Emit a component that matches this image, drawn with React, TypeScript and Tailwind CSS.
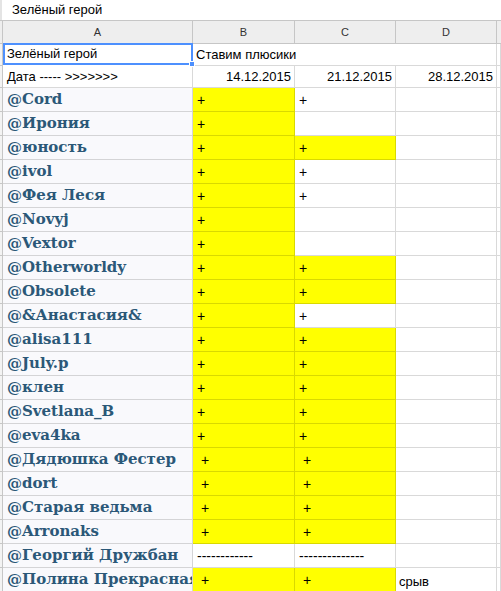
import React from "react";

type Row = {
  name: string;
  b: string;
  bYellow: boolean;
  c: string;
  cYellow: boolean;
  d?: string;
};

const rows: Row[] = [
  { name: "@Cord", b: "+", bYellow: true, c: "+", cYellow: false },
  { name: "@Ирония", b: "+", bYellow: true, c: "", cYellow: false },
  { name: "@юность", b: "+", bYellow: true, c: "+", cYellow: true },
  { name: "@ivol", b: "+", bYellow: true, c: "+", cYellow: false },
  { name: "@Фея Леся", b: "+", bYellow: true, c: "+", cYellow: false },
  { name: "@Novyj", b: "+", bYellow: true, c: "", cYellow: false },
  { name: "@Vextor", b: "+", bYellow: true, c: "", cYellow: false },
  { name: "@Otherworldy", b: "+", bYellow: true, c: "+", cYellow: true },
  { name: "@Obsolete", b: "+", bYellow: true, c: "+", cYellow: true },
  { name: "@&Анастасия&", b: "+", bYellow: true, c: "+", cYellow: false },
  { name: "@alisa111", b: "+", bYellow: true, c: "+", cYellow: true },
  { name: "@July.p", b: "+", bYellow: true, c: "+", cYellow: true },
  { name: "@клен", b: "+", bYellow: true, c: "+", cYellow: true },
  { name: "@Svetlana_B", b: "+", bYellow: true, c: "+", cYellow: true },
  { name: "@eva4ka", b: "+", bYellow: true, c: "+", cYellow: true },
  { name: "@Дядюшка Фестер", b: "\u00a0+", bYellow: true, c: "\u00a0+", cYellow: true },
  { name: "@dort", b: "\u00a0+", bYellow: true, c: "\u00a0+", cYellow: true },
  { name: "@Старая ведьма", b: "\u00a0+", bYellow: true, c: "\u00a0+", cYellow: true },
  { name: "@Arronaks", b: "\u00a0+", bYellow: true, c: "\u00a0+", cYellow: true },
  { name: "@Георгий Дружбан", b: "------------", bYellow: false, c: "--------------", cYellow: false },
  { name: "@Полина Прекрасная", b: "\u00a0+", bYellow: true, c: "\u00a0+", cYellow: true, d: "срыв" },
];

const cell = "border-r border-b border-black/15 overflow-hidden whitespace-nowrap";

const App: React.FC = () => {
  return (
    <div className="w-[501px] h-[591px] overflow-hidden bg-white text-black font-['Liberation_Sans',Arial,sans-serif]">
      {/* Formula bar */}
      <div className="h-[20px] pl-[10px] text-[13px] leading-[20px] border-l-2 border-[#e4e4e4]">Зелёный герой</div>

      {/* Grid */}
      <div className="grid grid-cols-[3px_190px_102px_101px_101px_4px] border-t border-[#c6c6c6]">
        {/* Column headers */}
        <div className="h-[23px] bg-[#eeeeee] border-r border-b border-[#c6c6c6]" />
        {["A", "B", "C", "D"].map((l) => (
          <div
            key={l}
            className="h-[23px] bg-[#eeeeee] border-r border-b border-[#c6c6c6] flex items-center justify-center text-[11px] text-[#333]"
          >
            {l}
          </div>
        ))}
        <div className="h-[23px] bg-[#eeeeee] border-b border-[#c6c6c6]" />

        {/* Row 1 */}
        <div className="h-[22px] bg-[#f3f3f3] border-r border-b border-[#c6c6c6]" />
        <div className="h-[22px] relative border-2 border-[#4d90fe] -mt-px flex items-end pl-[2px] text-[13px]">
          Зелёный герой
          <div className="absolute -right-[4px] -bottom-[4px] w-[6px] h-[6px] bg-[#4d90fe] border border-white" />
        </div>
        <div className={`${cell} h-[22px] flex items-end pl-[3px] pb-[1px] text-[13px] col-span-2 border-r-0`}>Ставим плюсики</div>
        <div className={`${cell} h-[22px]`} />
        <div className={`${cell} h-[22px]`} />

        {/* Row 2 */}
        <div className="h-[22px] bg-[#f3f3f3] border-r border-b border-[#c6c6c6]" />
        <div className={`${cell} h-[22px] flex items-end pl-[4px] pb-[1px] text-[13px]`}>Дата ----- &gt;&gt;&gt;&gt;&gt;&gt;&gt;</div>
        <div className={`${cell} h-[22px] flex items-end justify-end pr-[3px] pb-[1px] text-[13px]`}>14.12.2015</div>
        <div className={`${cell} h-[22px] flex items-end justify-end pr-[3px] pb-[1px] text-[13px]`}>21.12.2015</div>
        <div className={`${cell} h-[22px] flex items-end justify-end pr-[3px] pb-[1px] text-[13px]`}>28.12.2015</div>
        <div className={`${cell} h-[22px]`} />

        {rows.map((r) => (
          <React.Fragment key={r.name}>
            <div className="h-[24px] bg-[#f3f3f3] border-r border-b border-[#c6c6c6]" />
            <div className={`${cell} h-[24px] bg-[#f9f9fc] flex items-center pl-[4px] text-[15px] font-bold text-[#2b5878] font-['DejaVu_Serif',Georgia,serif]`}>
              {r.name}
            </div>
            <div className={`${cell} h-[24px] flex items-end pl-[4px] pb-0 text-[14px] ${r.bYellow ? "bg-[#ffff00]" : ""}`}>
              {r.b}
            </div>
            <div className={`${cell} h-[24px] flex items-end pl-[4px] pb-0 text-[14px] ${r.cYellow ? "bg-[#ffff00]" : ""}`}>
              {r.c}
            </div>
            <div className={`${cell} h-[24px] flex items-end pl-[3px] pb-0 text-[13px]`}>{r.d ?? ""}</div>
            <div className={`${cell} h-[24px]`} />
          </React.Fragment>
        ))}
      </div>
    </div>
  );
};

export default App;
